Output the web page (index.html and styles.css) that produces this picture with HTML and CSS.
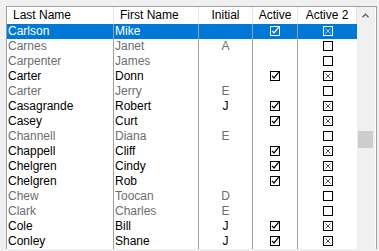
FILE: index.html
```html
<!DOCTYPE html>
<html>
<head>
<meta charset="utf-8">
<link rel="stylesheet" href="styles.css">
</head>
<body>
<svg width="0" height="0" class="defs">
  <defs>
    <symbol id="chk" viewBox="0 0 10 10"><rect x="0.5" y="0.5" width="9" height="9" fill="none" stroke="currentColor"/><polyline points="2,4.8 4,7 8.7,1.2" fill="none" stroke="currentColor" stroke-width="1.2"/></symbol>
    <symbol id="xbox" viewBox="0 0 10 10"><rect x="0.5" y="0.5" width="9" height="9" fill="none" stroke="currentColor"/><path d="M2.5 2.5L7.5 7.5M7.5 2.5L2.5 7.5" stroke="currentColor" stroke-width="0.9" opacity="0.75"/></symbol>
    <symbol id="ebox" viewBox="0 0 10 10"><rect x="0.5" y="0.5" width="9" height="9" fill="none" stroke="currentColor"/></symbol>
  </defs>
</svg>
<div class="frame">
  <div class="grid">
    <div class="row head">
      <div class="c c1">Last Name</div>
      <div class="c c2">First Name</div>
      <div class="c c3">Initial</div>
      <div class="c c4">Active</div>
      <div class="c c5">Active 2</div>
    </div>
    <div class="row sel">
      <div class="c c1">Carlson</div><div class="c c2">Mike</div><div class="c c3"></div>
      <div class="c c4"><svg class="cb"><use href="#chk"/></svg></div>
      <div class="c c5"><svg class="cb"><use href="#xbox"/></svg></div>
    </div>
    <div class="row off">
      <div class="c c1">Carnes</div><div class="c c2">Janet</div><div class="c c3">A</div>
      <div class="c c4"></div>
      <div class="c c5"><svg class="cb"><use href="#ebox"/></svg></div>
    </div>
    <div class="row off">
      <div class="c c1">Carpenter</div><div class="c c2">James</div><div class="c c3"></div>
      <div class="c c4"></div>
      <div class="c c5"><svg class="cb"><use href="#ebox"/></svg></div>
    </div>
    <div class="row">
      <div class="c c1">Carter</div><div class="c c2">Donn</div><div class="c c3"></div>
      <div class="c c4"><svg class="cb"><use href="#chk"/></svg></div>
      <div class="c c5"><svg class="cb"><use href="#xbox"/></svg></div>
    </div>
    <div class="row off">
      <div class="c c1">Carter</div><div class="c c2">Jerry</div><div class="c c3">E</div>
      <div class="c c4"></div>
      <div class="c c5"><svg class="cb"><use href="#ebox"/></svg></div>
    </div>
    <div class="row">
      <div class="c c1">Casagrande</div><div class="c c2">Robert</div><div class="c c3">J</div>
      <div class="c c4"><svg class="cb"><use href="#chk"/></svg></div>
      <div class="c c5"><svg class="cb"><use href="#xbox"/></svg></div>
    </div>
    <div class="row">
      <div class="c c1">Casey</div><div class="c c2">Curt</div><div class="c c3"></div>
      <div class="c c4"><svg class="cb"><use href="#chk"/></svg></div>
      <div class="c c5"><svg class="cb"><use href="#xbox"/></svg></div>
    </div>
    <div class="row off">
      <div class="c c1">Channell</div><div class="c c2">Diana</div><div class="c c3">E</div>
      <div class="c c4"></div>
      <div class="c c5"><svg class="cb"><use href="#ebox"/></svg></div>
    </div>
    <div class="row">
      <div class="c c1">Chappell</div><div class="c c2">Cliff</div><div class="c c3"></div>
      <div class="c c4"><svg class="cb"><use href="#chk"/></svg></div>
      <div class="c c5"><svg class="cb"><use href="#xbox"/></svg></div>
    </div>
    <div class="row">
      <div class="c c1">Chelgren</div><div class="c c2">Cindy</div><div class="c c3"></div>
      <div class="c c4"><svg class="cb"><use href="#chk"/></svg></div>
      <div class="c c5"><svg class="cb"><use href="#xbox"/></svg></div>
    </div>
    <div class="row">
      <div class="c c1">Chelgren</div><div class="c c2">Rob</div><div class="c c3"></div>
      <div class="c c4"><svg class="cb"><use href="#chk"/></svg></div>
      <div class="c c5"><svg class="cb"><use href="#xbox"/></svg></div>
    </div>
    <div class="row off">
      <div class="c c1">Chew</div><div class="c c2">Toocan</div><div class="c c3">D</div>
      <div class="c c4"></div>
      <div class="c c5"><svg class="cb"><use href="#ebox"/></svg></div>
    </div>
    <div class="row off">
      <div class="c c1">Clark</div><div class="c c2">Charles</div><div class="c c3">E</div>
      <div class="c c4"></div>
      <div class="c c5"><svg class="cb"><use href="#ebox"/></svg></div>
    </div>
    <div class="row">
      <div class="c c1">Cole</div><div class="c c2">Bill</div><div class="c c3">J</div>
      <div class="c c4"><svg class="cb"><use href="#chk"/></svg></div>
      <div class="c c5"><svg class="cb"><use href="#xbox"/></svg></div>
    </div>
    <div class="row">
      <div class="c c1">Conley</div><div class="c c2">Shane</div><div class="c c3">J</div>
      <div class="c c4"><svg class="cb"><use href="#chk"/></svg></div>
      <div class="c c5"><svg class="cb"><use href="#xbox"/></svg></div>
    </div>
  </div>
  <div class="scrollbar">
    <div class="sb-btn"><svg width="7" height="5" viewBox="0 0 7 5"><polyline points="0.5,4.2 3.5,1.2 6.5,4.2" fill="none" stroke="#606060" stroke-width="1.3"/></svg></div>
    <div class="sb-thumb"></div>
  </div>
</div>
</body>
</html>
```

FILE: styles.css
```css
html, body {
  margin: 0;
  padding: 0;
  background: #f0f0f0;
  overflow: hidden;
  width: 379px;
  height: 251px;
}
body {
  font-family: "Liberation Sans", Arial, sans-serif;
  font-size: 12px;
  line-height: 15px;
  color: #000;
}
.defs {
  position: absolute;
  width: 0;
  height: 0;
}
.frame {
  display: flex;
  margin: 6px 0 0 6px;
  width: 369px;
  border-left: 1px solid #a0a0a0;
  border-top: 1px solid #a0a0a0;
  border-right: 1px solid #a0a0a0;
  background: #fff;
}
.grid {
  display: flex;
  flex-direction: column;
  width: 350px;
}
.row {
  display: flex;
  height: 15px;
}
.c {
  box-sizing: border-box;
  height: 100%;
  border-right: 1px solid #a0a0a0;
  padding-left: 1px;
  white-space: nowrap;
  overflow: hidden;
}
.c1 { width: 107px; }
.c2 { width: 85px; }
.c3 { width: 54px; text-align: center; padding-left: 0; }
.c4 { width: 45px; display: flex; align-items: center; justify-content: center; padding-left: 0; color: #000; }
.c5 { width: 59px; display: flex; align-items: center; justify-content: center; padding-left: 0; border-right: none; color: #000; }
.head {
  height: 17px;
  background: #fff;
}
.head .c {
  padding-top: 1px;
  padding-left: 6px;
  border-right: 1px solid #e5e5e5;
  color: #000;
  display: block;
}
.head .c3, .head .c4, .head .c5 {
  text-align: center;
  padding-left: 0;
}
.head .c5 {
  border-right: 1px solid #e5e5e5;
}
.cb {
  width: 10px;
  height: 10px;
  margin-top: -1px;
}
.off .c1, .off .c2, .off .c3 {
  color: #6d6d6d;
}
.sel {
  background: #0078d7;
  color: #fff;
}
.sel .c4, .sel .c5 {
  color: #fff;
}
.scrollbar {
  width: 18px;
  background: #f0f0f0;
  display: flex;
  flex-direction: column;
  align-items: center;
}
.sb-btn {
  height: 17px;
  width: 100%;
  display: flex;
  justify-content: center;
  align-items: center;
  padding-right: 1px;
  box-sizing: border-box;
}
.sb-thumb {
  margin-top: 107px;
  width: 15px;
  height: 17px;
  background: #cdcdcd;
  margin-right: 1px;
}
```
